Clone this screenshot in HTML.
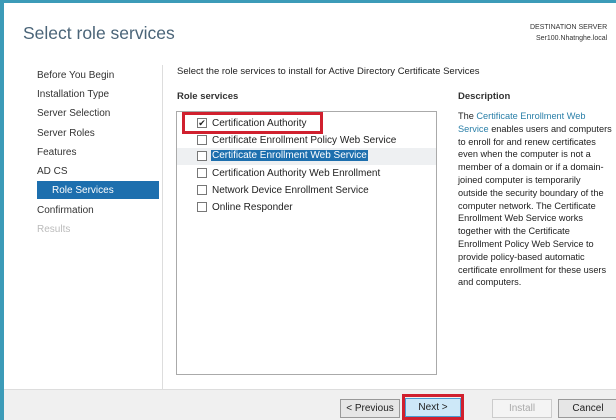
<!DOCTYPE html>
<html><head><style>
*{margin:0;padding:0;box-sizing:border-box}
body{width:616px;height:420px;overflow:hidden;background:#fff;font-family:"Liberation Sans",sans-serif;font-size:10px;color:#1e1e1e;position:relative}
.a{position:absolute;white-space:nowrap}
.nav{left:37px;color:#333;font-size:10px}
.cb{position:absolute;width:10px;height:10px;border:1px solid #777;background:#fff}
.row{position:absolute;left:212px;font-size:10px}
.desc{left:458px;top:110px;line-height:12.8px;font-size:9.2px;color:#222}
.btn{position:absolute;top:399px;height:19px;border:1px solid #999;background:#e6e6e6;text-align:center;line-height:17px;font-size:10px}
</style></head><body>
<div class="a" style="left:0;top:0;width:616px;height:3px;background:#3c9bb8"></div>
<div class="a" style="left:0;top:0;width:4px;height:420px;background:#3c9bb8"></div>
<div class="a" style="left:23px;top:23px;font-size:17.5px;color:#4a6478">Select role services</div>
<div class="a" style="left:530px;top:22px;font-size:7px;color:#333;text-align:right;line-height:11px">DESTINATION SERVER<br>Ser100.Nhatnghe.local</div>
<div class="a" style="left:162px;top:65px;width:1px;height:325px;background:#ddd"></div>
<div class="a nav" style="top:70px">Before You Begin</div>
<div class="a nav" style="top:89px">Installation Type</div>
<div class="a nav" style="top:108px">Server Selection</div>
<div class="a nav" style="top:128px">Server Roles</div>
<div class="a nav" style="top:147px">Features</div>
<div class="a nav" style="top:166px">AD CS</div>
<div class="a" style="left:37px;top:181px;width:122px;height:18px;background:#1d6fae"></div>
<div class="a" style="left:52px;top:185px;color:#fff">Role Services</div>
<div class="a nav" style="top:205px">Confirmation</div>
<div class="a nav" style="top:224px;color:#bbb">Results</div>
<div class="a" style="left:177px;top:66px;font-size:9.5px">Select the role services to install for Active Directory Certificate Services</div>
<div class="a" style="left:177px;top:91px;font-weight:bold;font-size:9.5px;color:#333">Role services</div>
<div class="a" style="left:458px;top:91px;font-weight:bold;font-size:9.5px;color:#333">Description</div>
<div class="a" style="left:176px;top:111px;width:261px;height:264px;border:1px solid #aaa"></div>
<div class="a" style="left:177px;top:148px;width:259px;height:17px;background:#eef0f2"></div>
<div class="cb" style="left:197px;top:118px;font-size:9px;line-height:8px;text-align:center">✔</div>
<div class="row" style="top:118px">Certification Authority</div>
<div class="cb" style="left:197px;top:135px"></div>
<div class="row" style="top:135px">Certificate Enrollment Policy Web Service</div>
<div class="cb" style="left:197px;top:151px"></div>
<div class="row" style="top:150px;background:#1d6fae;color:#fff;padding:0 1px;left:211px">Certificate Enrollment Web Service</div>
<div class="cb" style="left:197px;top:168px"></div>
<div class="row" style="top:168px">Certification Authority Web Enrollment</div>
<div class="cb" style="left:197px;top:185px"></div>
<div class="row" style="top:185px">Network Device Enrollment Service</div>
<div class="cb" style="left:197px;top:202px"></div>
<div class="row" style="top:202px">Online Responder</div>
<div class="a" style="left:182px;top:112px;width:141px;height:22px;border:3px solid #d0202e"></div>
<div class="a desc">The <span style="color:#2a7fa8">Certificate Enrollment Web</span><br><span style="color:#2a7fa8">Service</span> enables users and computers<br>to enroll for and renew certificates<br>even when the computer is not a<br>member of a domain or if a domain-<br>joined computer is temporarily<br>outside the security boundary of the<br>computer network. The Certificate<br>Enrollment Web Service works<br>together with the Certificate<br>Enrollment Policy Web Service to<br>provide policy-based automatic<br>certificate enrollment for these users<br>and computers.</div>
<div class="a" style="left:4px;top:389px;width:612px;height:31px;background:#f0f0f0;border-top:1px solid #ddd"></div>
<div class="btn" style="left:340px;width:60px">&lt; Previous</div>
<div class="a" style="left:402px;top:394px;width:62px;height:26px;border:3px solid #d0202e"></div>
<div class="btn" style="left:405px;width:56px;top:398px;background:#cde8f8;border-color:#4a9bd0">Next &gt;</div>
<div class="btn" style="left:492px;width:60px;color:#aaa;background:#f4f4f4;border-color:#ccc">Install</div>
<div class="btn" style="left:558px;width:60px">Cancel</div>
</body></html>
